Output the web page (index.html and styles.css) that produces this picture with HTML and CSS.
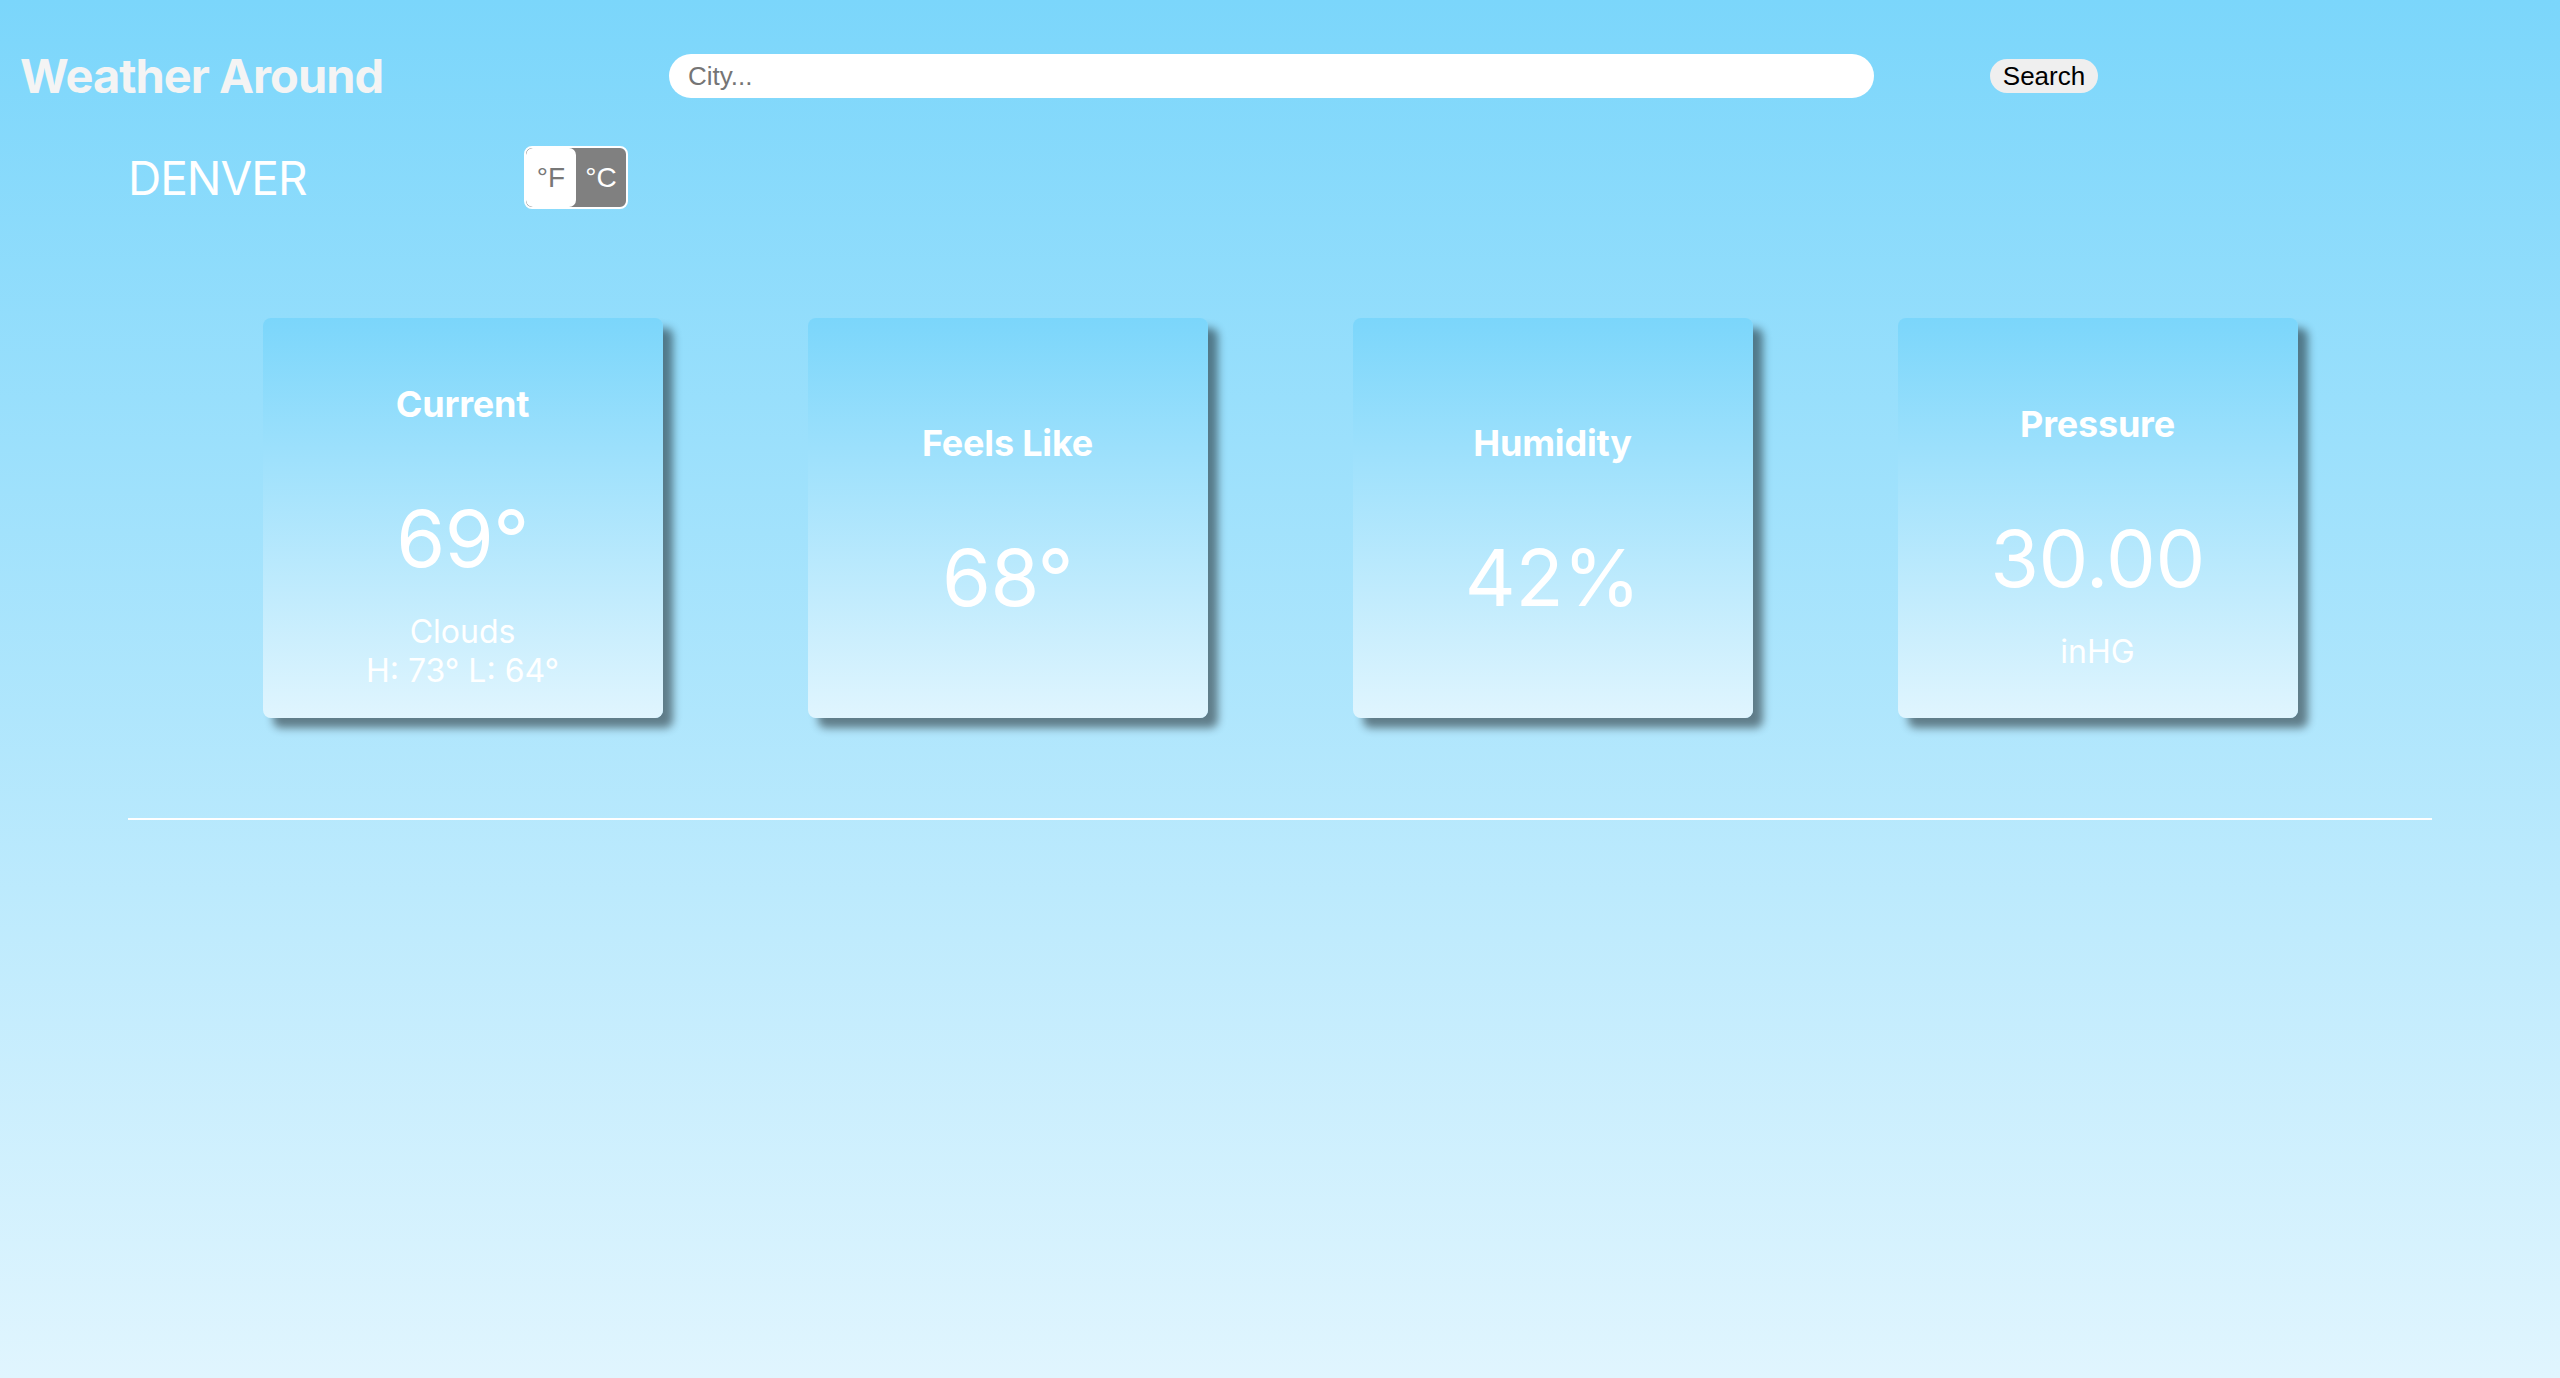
FILE: index.html
```html
<!DOCTYPE html>
<html lang="en">
<head>
<meta charset="utf-8">
<title>Weather Around</title>
<link rel="stylesheet" href="styles.css">
</head>
<body>
<header class="topbar">
  <h1 class="brand">Weather Around</h1>
  <input class="city-input" type="text" placeholder="City...">
  <button class="search-btn" type="button">Search</button>
</header>
<main class="content">
  <section class="location-row">
    <h2 class="city-name">DENVER</h2>
    <div class="unit-toggle">
      <span class="unit unit-active">°F</span>
      <span class="unit">°C</span>
    </div>
  </section>
  <section class="cards">
    <article class="card">
      <h3 class="card-title">Current</h3>
      <p class="card-value">69°</p>
      <p class="card-sub">Clouds</p>
      <p class="card-sub">H: 73° L: 64°</p>
    </article>
    <article class="card">
      <h3 class="card-title">Feels Like</h3>
      <p class="card-value">68°</p>
    </article>
    <article class="card">
      <h3 class="card-title">Humidity</h3>
      <p class="card-value">42%</p>
    </article>
    <article class="card">
      <h3 class="card-title">Pressure</h3>
      <p class="card-value">30.00</p>
      <p class="card-sub">inHG</p>
    </article>
  </section>
  <hr class="divider">
</main>
</body>
</html>
```
FILE: styles.css
```css
html {
  min-height: 100%;
  background: linear-gradient(to bottom, #7bd6fb 0%, #e0f5fe 100%);
}

body {
  margin: 0;
  min-height: 1378px;
  font-family: Inter, "Noto Sans", sans-serif;
  color: #fff;
}

.topbar {
  display: grid;
  grid-template-columns: 649px 1205px auto;
  align-items: center;
  padding: 54px 20px 0 20px;
  height: 44px;
}

.brand {
  margin: 0;
  font-size: 47px;
  line-height: 44px;
  font-weight: 700;
  letter-spacing: -1px;
  color: #f4f4f4;
  white-space: nowrap;
}

.city-input {
  box-sizing: border-box;
  width: 1205px;
  height: 44px;
  border: none;
  border-radius: 22px;
  background: #fff;
  padding: 0 19px;
  font-family: "Liberation Sans", Arial, sans-serif;
  font-size: 26px;
  color: #333;
  outline: none;
}

.city-input::placeholder {
  color: #757575;
}

.search-btn {
  justify-self: start;
  margin-left: 116px;
  width: 108px;
  height: 34px;
  padding: 0;
  border: none;
  border-radius: 17px;
  background: #efefef;
  color: #000;
  font-family: "Liberation Sans", Arial, sans-serif;
  font-size: 26px;
  line-height: 34px;
  text-align: center;
}

.content {
  padding: 0 128px;
}

.location-row {
  display: flex;
  align-items: center;
  margin-top: 48px;
  height: 63px;
}

.city-name {
  margin: 0;
  width: 396px;
  font-size: 46px;
  line-height: 63px;
  font-weight: 400;
  letter-spacing: -1px;
  padding-top: 2px;
  color: #fff;
}

.unit-toggle {
  box-sizing: border-box;
  display: flex;
  width: 104px;
  height: 63px;
  border: 2px solid #fff;
  border-radius: 8px;
  background: #808080;
  overflow: hidden;
}

.unit {
  flex: 1;
  display: flex;
  align-items: center;
  justify-content: center;
  font-family: "Liberation Sans", Arial, sans-serif;
  font-size: 28px;
  color: #fff;
}

.unit-active {
  background: #fff;
  color: #777;
  border-radius: 7px;
}

.cards {
  display: flex;
  justify-content: center;
  gap: 145px;
  margin: 109px -128px 0 -128px;
}

.card {
  box-sizing: border-box;
  width: 400px;
  height: 400px;
  border-radius: 8px;
  background: linear-gradient(to bottom, #7bd6fb 0%, #e0f5fe 100%);
  box-shadow: 10px 10px 8px rgba(0, 0, 0, 0.46);
  display: flex;
  flex-direction: column;
  align-items: center;
  justify-content: center;
  text-align: center;
}

.card-title {
  margin: 38px 0 74px 0;
  font-size: 36px;
  line-height: 40px;
  font-weight: 700;
  letter-spacing: -0.2px;
}

.card-value {
  margin: 0 0 34px 0;
  font-size: 79px;
  line-height: 80px;
  font-weight: 400;
  letter-spacing: -0.5px;
}

.card-sub {
  margin: 0;
  font-size: 32px;
  line-height: 39px;
  font-weight: 400;
}

.divider {
  margin: 100px 0 0 0;
  border: none;
  height: 2px;
  background: #fff;
}
```
